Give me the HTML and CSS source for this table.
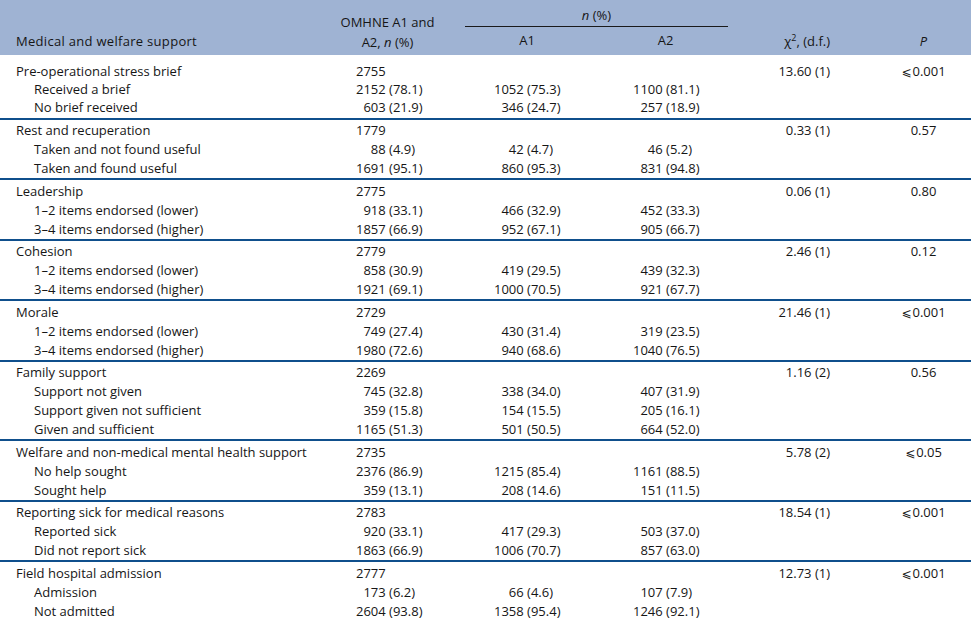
FILE: index.html
```html
<!DOCTYPE html>
<html lang="en">
<head>
<meta charset="utf-8">
<title>Medical and welfare support</title>
<link rel="stylesheet" href="styles.css">
</head>
<body>
<table class="tbl">
  <colgroup>
    <col class="c1"><col class="c2"><col class="c3"><col class="c4"><col class="c5"><col class="c6">
  </colgroup>
  <thead>
    <tr class="h1">
      <th rowspan="2" class="th-lab">Medical and welfare support</th>
      <th rowspan="2" class="th-tot">OMHNE A1 and<br>A2, <i>n</i> (%)</th>
      <th colspan="2" class="th-span"><i>n</i> (%)</th>
      <th rowspan="2" class="th-chi">χ<sup>2</sup>, (d.f.)</th>
      <th rowspan="2" class="th-p"><i>P</i></th>
    </tr>
    <tr class="h2">
      <th class="th-a1">A1</th>
      <th class="th-a2">A2</th>
    </tr>
  </thead>
  <tbody class="grp first">
    <tr><td class="lab">Pre-operational stress brief</td><td class="tot"><span class="n">2755</span></td><td class="a1"></td><td class="a2"></td><td class="chi">13.60 (1)</td><td class="p"><span class="le">⩽</span>0.001</td></tr>
    <tr><td class="lab sub">Received a brief</td><td class="tot"><span class="n">2152</span> (78.1)</td><td class="a1"><span class="n">1052</span> (75.3)</td><td class="a2"><span class="n">1100</span> (81.1)</td><td class="chi"></td><td class="p"></td></tr>
    <tr><td class="lab sub">No brief received</td><td class="tot"><span class="n">603</span> (21.9)</td><td class="a1"><span class="n">346</span> (24.7)</td><td class="a2"><span class="n">257</span> (18.9)</td><td class="chi"></td><td class="p"></td></tr>
  </tbody>
  <tbody class="grp">
    <tr><td class="lab">Rest and recuperation</td><td class="tot"><span class="n">1779</span></td><td class="a1"></td><td class="a2"></td><td class="chi">0.33 (1)</td><td class="p">0.57</td></tr>
    <tr><td class="lab sub">Taken and not found useful</td><td class="tot"><span class="n">88</span> (4.9)</td><td class="a1"><span class="n">42</span> (4.7)</td><td class="a2"><span class="n">46</span> (5.2)</td><td class="chi"></td><td class="p"></td></tr>
    <tr><td class="lab sub">Taken and found useful</td><td class="tot"><span class="n">1691</span> (95.1)</td><td class="a1"><span class="n">860</span> (95.3)</td><td class="a2"><span class="n">831</span> (94.8)</td><td class="chi"></td><td class="p"></td></tr>
  </tbody>
  <tbody class="grp">
    <tr><td class="lab">Leadership</td><td class="tot"><span class="n">2775</span></td><td class="a1"></td><td class="a2"></td><td class="chi">0.06 (1)</td><td class="p">0.80</td></tr>
    <tr><td class="lab sub">1–2 items endorsed (lower)</td><td class="tot"><span class="n">918</span> (33.1)</td><td class="a1"><span class="n">466</span> (32.9)</td><td class="a2"><span class="n">452</span> (33.3)</td><td class="chi"></td><td class="p"></td></tr>
    <tr><td class="lab sub">3–4 items endorsed (higher)</td><td class="tot"><span class="n">1857</span> (66.9)</td><td class="a1"><span class="n">952</span> (67.1)</td><td class="a2"><span class="n">905</span> (66.7)</td><td class="chi"></td><td class="p"></td></tr>
  </tbody>
  <tbody class="grp">
    <tr><td class="lab">Cohesion</td><td class="tot"><span class="n">2779</span></td><td class="a1"></td><td class="a2"></td><td class="chi">2.46 (1)</td><td class="p">0.12</td></tr>
    <tr><td class="lab sub">1–2 items endorsed (lower)</td><td class="tot"><span class="n">858</span> (30.9)</td><td class="a1"><span class="n">419</span> (29.5)</td><td class="a2"><span class="n">439</span> (32.3)</td><td class="chi"></td><td class="p"></td></tr>
    <tr><td class="lab sub">3–4 items endorsed (higher)</td><td class="tot"><span class="n">1921</span> (69.1)</td><td class="a1"><span class="n">1000</span> (70.5)</td><td class="a2"><span class="n">921</span> (67.7)</td><td class="chi"></td><td class="p"></td></tr>
  </tbody>
  <tbody class="grp">
    <tr><td class="lab">Morale</td><td class="tot"><span class="n">2729</span></td><td class="a1"></td><td class="a2"></td><td class="chi">21.46 (1)</td><td class="p"><span class="le">⩽</span>0.001</td></tr>
    <tr><td class="lab sub">1–2 items endorsed (lower)</td><td class="tot"><span class="n">749</span> (27.4)</td><td class="a1"><span class="n">430</span> (31.4)</td><td class="a2"><span class="n">319</span> (23.5)</td><td class="chi"></td><td class="p"></td></tr>
    <tr><td class="lab sub">3–4 items endorsed (higher)</td><td class="tot"><span class="n">1980</span> (72.6)</td><td class="a1"><span class="n">940</span> (68.6)</td><td class="a2"><span class="n">1040</span> (76.5)</td><td class="chi"></td><td class="p"></td></tr>
  </tbody>
  <tbody class="grp">
    <tr><td class="lab">Family support</td><td class="tot"><span class="n">2269</span></td><td class="a1"></td><td class="a2"></td><td class="chi">1.16 (2)</td><td class="p">0.56</td></tr>
    <tr><td class="lab sub">Support not given</td><td class="tot"><span class="n">745</span> (32.8)</td><td class="a1"><span class="n">338</span> (34.0)</td><td class="a2"><span class="n">407</span> (31.9)</td><td class="chi"></td><td class="p"></td></tr>
    <tr><td class="lab sub">Support given not sufficient</td><td class="tot"><span class="n">359</span> (15.8)</td><td class="a1"><span class="n">154</span> (15.5)</td><td class="a2"><span class="n">205</span> (16.1)</td><td class="chi"></td><td class="p"></td></tr>
    <tr><td class="lab sub">Given and sufficient</td><td class="tot"><span class="n">1165</span> (51.3)</td><td class="a1"><span class="n">501</span> (50.5)</td><td class="a2"><span class="n">664</span> (52.0)</td><td class="chi"></td><td class="p"></td></tr>
  </tbody>
  <tbody class="grp">
    <tr><td class="lab">Welfare and non-medical mental health support</td><td class="tot"><span class="n">2735</span></td><td class="a1"></td><td class="a2"></td><td class="chi">5.78 (2)</td><td class="p"><span class="le">⩽</span>0.05</td></tr>
    <tr><td class="lab sub">No help sought</td><td class="tot"><span class="n">2376</span> (86.9)</td><td class="a1"><span class="n">1215</span> (85.4)</td><td class="a2"><span class="n">1161</span> (88.5)</td><td class="chi"></td><td class="p"></td></tr>
    <tr><td class="lab sub">Sought help</td><td class="tot"><span class="n">359</span> (13.1)</td><td class="a1"><span class="n">208</span> (14.6)</td><td class="a2"><span class="n">151</span> (11.5)</td><td class="chi"></td><td class="p"></td></tr>
  </tbody>
  <tbody class="grp">
    <tr><td class="lab">Reporting sick for medical reasons</td><td class="tot"><span class="n">2783</span></td><td class="a1"></td><td class="a2"></td><td class="chi">18.54 (1)</td><td class="p"><span class="le">⩽</span>0.001</td></tr>
    <tr><td class="lab sub">Reported sick</td><td class="tot"><span class="n">920</span> (33.1)</td><td class="a1"><span class="n">417</span> (29.3)</td><td class="a2"><span class="n">503</span> (37.0)</td><td class="chi"></td><td class="p"></td></tr>
    <tr><td class="lab sub">Did not report sick</td><td class="tot"><span class="n">1863</span> (66.9)</td><td class="a1"><span class="n">1006</span> (70.7)</td><td class="a2"><span class="n">857</span> (63.0)</td><td class="chi"></td><td class="p"></td></tr>
  </tbody>
  <tbody class="grp">
    <tr><td class="lab">Field hospital admission</td><td class="tot"><span class="n">2777</span></td><td class="a1"></td><td class="a2"></td><td class="chi">12.73 (1)</td><td class="p"><span class="le">⩽</span>0.001</td></tr>
    <tr><td class="lab sub">Admission</td><td class="tot"><span class="n">173</span> (6.2)</td><td class="a1"><span class="n">66</span> (4.6)</td><td class="a2"><span class="n">107</span> (7.9)</td><td class="chi"></td><td class="p"></td></tr>
    <tr><td class="lab sub">Not admitted</td><td class="tot"><span class="n">2604</span> (93.8)</td><td class="a1"><span class="n">1358</span> (95.4)</td><td class="a2"><span class="n">1246</span> (92.1)</td><td class="chi"></td><td class="p"></td></tr>
  </tbody>
</table>
</body>
</html>
```
FILE: styles.css
```css
html, body {
  margin: 0;
  padding: 0;
  background: #ffffff;
}

body {
  font-family: "Open Sans", "DejaVu Sans", sans-serif;
  font-size: 13px;
  color: #161616;
}

.tbl {
  width: 971px;
  table-layout: fixed;
  border-collapse: collapse;
  border-spacing: 0;
}

.c1 { width: 310px; }
.c2 { width: 155px; }
.c3 { width: 131px; }
.c4 { width: 132px; }
.c5 { width: 148px; }
.c6 { width: 95px; }

/* header */
thead th {
  background: #9fb3d3;
  font-weight: normal;
  padding: 0;
  line-height: 20px;
}

.h1 th { height: 23px; }
.h2 th { height: 26px; }

.th-lab {
  text-align: left;
  vertical-align: bottom;
  letter-spacing: 0.3px;
  padding: 0 0 4px 16px !important;
}

.th-tot {
  text-align: center;
  vertical-align: bottom;
  padding-bottom: 3px !important;
}

.th-span {
  text-align: center;
  vertical-align: middle;
  border-bottom: 1.5px solid #1a1a1a;
  padding-top: 3px !important;
}

.th-a1 {
  text-align: center;
  padding-right: 7px !important;
  padding-bottom: 2px !important;
}

.th-a2 {
  text-align: center;
  padding-left: 7px !important;
  padding-bottom: 2px !important;
}

.th-chi {
  text-align: right;
  vertical-align: bottom;
  padding: 0 46px 4px 0 !important;
}

.th-chi sup {
  font-size: 9px;
  line-height: 0;
  vertical-align: 5px;
}

.th-p {
  text-align: center;
  vertical-align: bottom;
  padding-bottom: 4px !important;
}

/* body */
.grp + .grp {
  border-top: 2px solid #0f4f8c;
}

tbody td {
  padding: 0;
  line-height: 19px;
  white-space: nowrap;
  vertical-align: top;
}

.grp.first td { line-height: 18px; }

.grp tr:first-child td { padding-top: 1.5px; }
.grp.first tr:first-child td { padding-top: 7px; }
.grp tr:last-child td { padding-bottom: 0; }
.grp.first tr:last-child td { padding-bottom: 1.5px; }

.lab { padding-left: 16px !important; }
.lab.sub { padding-left: 34px !important; }

.n {
  display: inline-block;
  width: 4ch;
  text-align: right;
}

.tot { padding-left: 46px !important; }
.a1 { padding-left: 29px !important; }
.a2 { padding-left: 37px !important; }

.chi {
  text-align: right;
  padding-right: 46px !important;
}

.p { text-align: center; }

.le {
  font-family: "DejaVu Sans", sans-serif;
  font-size: 12px;
  line-height: 1;
  margin-right: 1px;
}
```
